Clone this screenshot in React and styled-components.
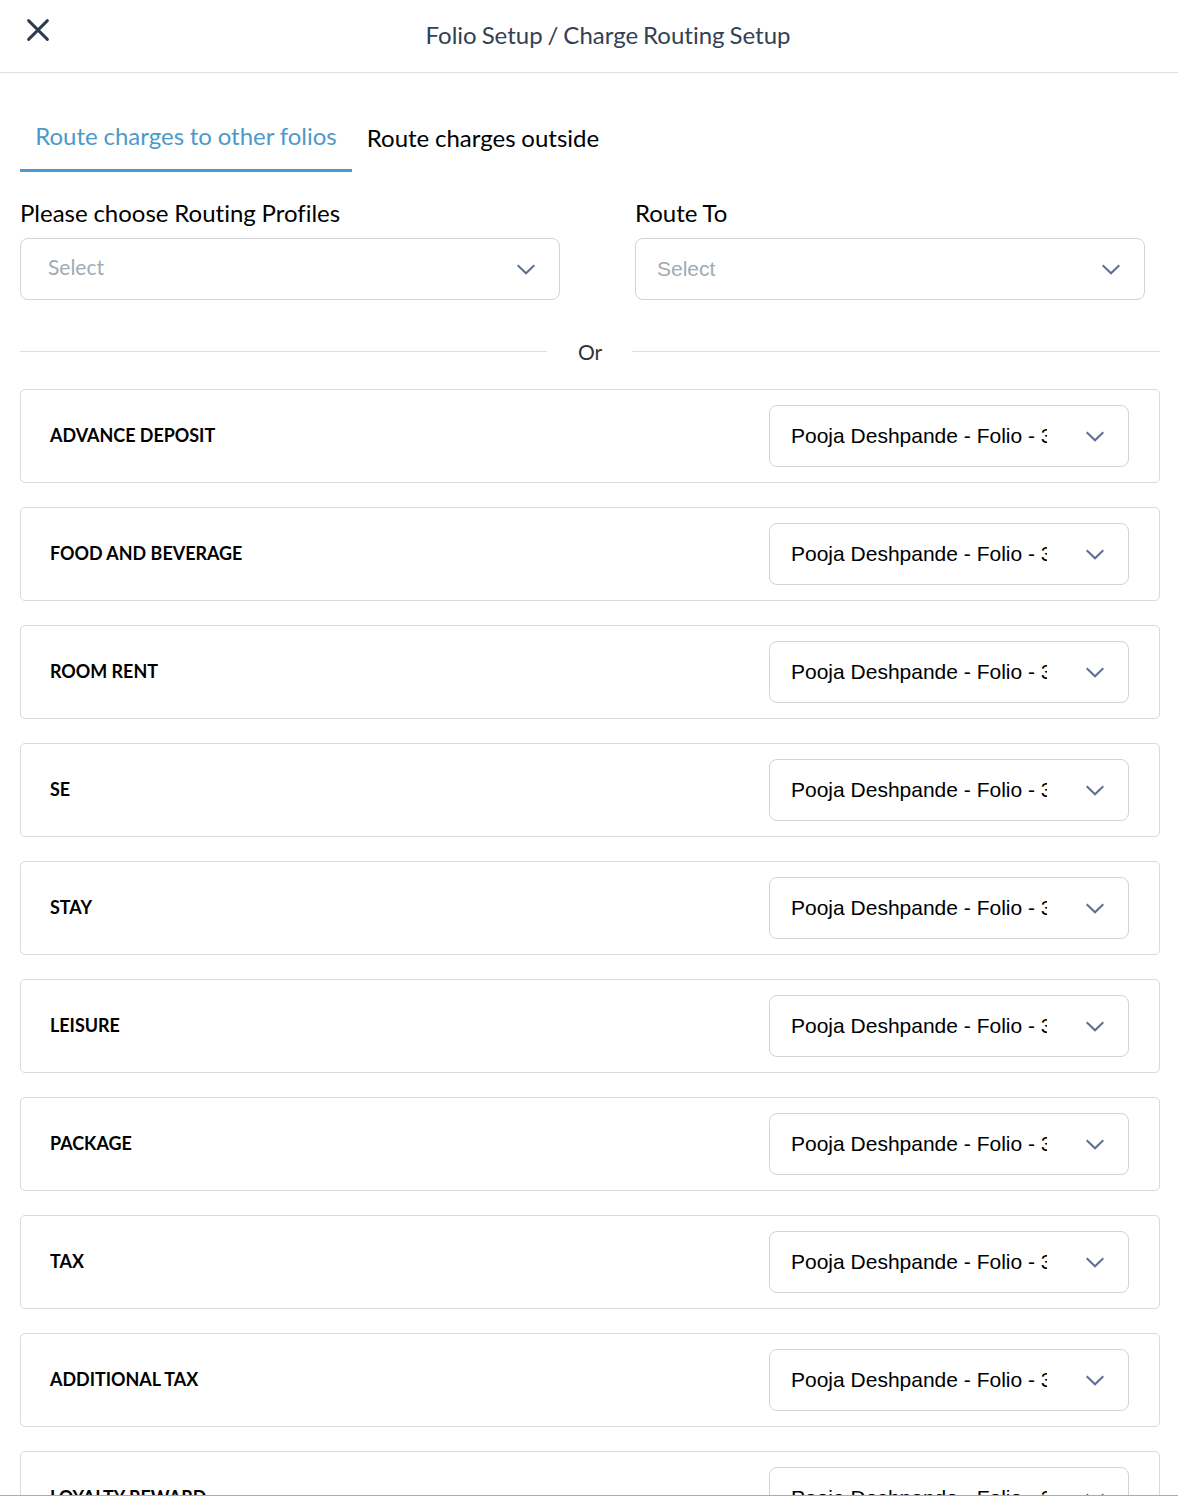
import React, { useState } from "react";
import styled, { createGlobalStyle, css } from "styled-components";

const GlobalStyle = createGlobalStyle`
  * {
    box-sizing: border-box;
  }
  body {
    margin: 0;
    background: #fff;
    font-family: Lato, sans-serif;
    font-variant-ligatures: none;
    color: #000;
  }
  button {
    margin: 0;
    padding: 0;
    border: 0;
    background: none;
    font: inherit;
    font-variant-ligatures: none;
    cursor: pointer;
  }
`;

const Drawer = styled.div`
  display: flex;
  flex-direction: column;
  height: 1496px;
  overflow: hidden;
  border-bottom: 1px solid #ababab;
`;

const Header = styled.header`
  flex: none;
  display: grid;
  grid-template-columns: 38px 1fr;
  height: 73px;
  border-bottom: 1px solid #e0e0e0;
`;

const CloseButton = styled.button`
  display: flex;
  align-self: start;
  margin: 18px 0 0 26px;
  width: 24px;
  height: 24px;
`;

const Title = styled.h1`
  margin: 0;
  padding-top: 20px;
  font-size: 24px;
  font-weight: 400;
  line-height: 30px;
  word-spacing: -1.2px;
  text-align: center;
  color: #334155;
`;

const Content = styled.main`
  flex: 1;
  min-height: 0;
  padding: 31px 18px 0 20px;
`;

const Tabs = styled.div`
  display: flex;
  height: 68px;
`;

const Tab = styled.button`
  width: ${(props) => props.$width}px;
  height: 68px;
  padding-bottom: 1px;
  font-size: 24px;
  line-height: 30px;
  word-spacing: -0.4px;
  white-space: nowrap;
  ${(props) =>
    props.$active &&
    css`
      padding-bottom: 2px;
      color: #4c9acb;
      border-bottom: 3px solid #4c9acb;
    `}
`;

const Fields = styled.div`
  display: flex;
  gap: 75px;
  margin-top: 26px;
`;

const Field = styled.div`
  width: ${(props) => props.$width}px;
`;

const Label = styled.div`
  height: 40px;
  font-size: 24px;
  line-height: 30px;
  word-spacing: -0.4px;
  white-space: nowrap;
`;

const SelectBox = styled.button`
  display: flex;
  align-items: center;
  justify-content: space-between;
  width: ${(props) => props.$width || "100%"};
  height: 62px;
  padding: 0 24px 0 ${(props) => props.$indent || 21}px;
  border: 1px solid #ced4da;
  border-radius: 8px;
  background: #fff;
  text-align: left;
`;

const Value = styled.span`
  width: 256px;
  overflow: hidden;
  white-space: nowrap;
  font-family: ${(props) => (props.$lato ? "Lato" : '"Liberation Sans"')}, sans-serif;
  font-size: 21px;
  line-height: 28px;
  color: ${(props) => (props.$placeholder ? "#a0abb3" : "#000")};
  ${(props) => props.$lato && "padding-bottom: 4px;"}
`;

const Divider = styled.div`
  display: flex;
  align-items: center;
  height: 30px;
  margin: 36px 0 23px;
  font-size: 21px;
  color: #333;
  &:before,
  &:after {
    content: "";
    flex: 0 0 527px;
    height: 1px;
    background: #dcdee0;
  }
  &:after {
    flex: 1;
  }
`;

const Or = styled.span`
  width: 85px;
  padding: 1px 0 0 1px;
  text-align: center;
`;

const ChargeList = styled.div`
  display: flex;
  flex-direction: column;
  gap: 24px;
`;

const ChargeRow = styled.div`
  flex: none;
  display: flex;
  align-items: center;
  justify-content: space-between;
  height: 94px;
  padding: 0 30px 0 28.5px;
  border: 1px solid #d9dadb;
  border-radius: 5px;
`;

// condensed a little, the bold caps are too wide otherwise
const ChargeName = styled.div`
  padding-bottom: 2px;
  font-size: 19px;
  font-weight: 700;
  line-height: 24px;
  transform: scaleX(0.943);
  transform-origin: left center;
`;

const charges = [
  "ADVANCE DEPOSIT",
  "FOOD AND BEVERAGE",
  "ROOM RENT",
  "SE",
  "STAY",
  "LEISURE",
  "PACKAGE",
  "TAX",
  "ADDITIONAL TAX",
  "LOYALTY REWARD",
];

const CloseIcon = () => (
  <svg width="24" height="24" viewBox="0 0 24 24" fill="none">
    <path d="M2.6 2.6L21.4 21.4M21.4 2.6L2.6 21.4" stroke="#2d3b4e" strokeWidth="2.9" strokeLinecap="round" />
  </svg>
);

const Chevron = () => (
  <svg width="18" height="12" viewBox="0 0 18 12" fill="none">
    <path d="M0.7 2.3L9 10.3L17.3 2.3" stroke="#5c6f91" strokeWidth="2" />
  </svg>
);

const Select = ({ value, width, indent, lato }) => (
  <SelectBox $width={width} $indent={indent}>
    <Value $lato={lato} $placeholder={!value}>
      {value || "Select"}
    </Value>
    <Chevron />
  </SelectBox>
);

const App = () => {
  const [tab, setTab] = useState("folios");

  return (
    <>
      <GlobalStyle />
      <Drawer>
        <Header>
          <CloseButton aria-label="Close">
            <CloseIcon />
          </CloseButton>
          <Title>Folio Setup / Charge Routing Setup</Title>
        </Header>
        <Content>
          <Tabs>
            <Tab $width={332} $active={tab === "folios"} onClick={() => setTab("folios")}>
              Route charges to other folios
            </Tab>
            <Tab $width={262} $active={tab === "outside"} onClick={() => setTab("outside")}>
              Route charges outside
            </Tab>
          </Tabs>
          <Fields>
            <Field $width={540}>
              <Label>Please choose Routing Profiles</Label>
              <Select indent={27} lato />
            </Field>
            <Field $width={510}>
              <Label>Route To</Label>
              <Select />
            </Field>
          </Fields>
          <Divider>
            <Or>Or</Or>
          </Divider>
          <ChargeList>
            {charges.map((name) => (
              <ChargeRow key={name}>
                <ChargeName>{name}</ChargeName>
                <Select width="360px" value="Pooja Deshpande - Folio - 3" />
              </ChargeRow>
            ))}
          </ChargeList>
        </Content>
      </Drawer>
    </>
  );
};

export default App;
